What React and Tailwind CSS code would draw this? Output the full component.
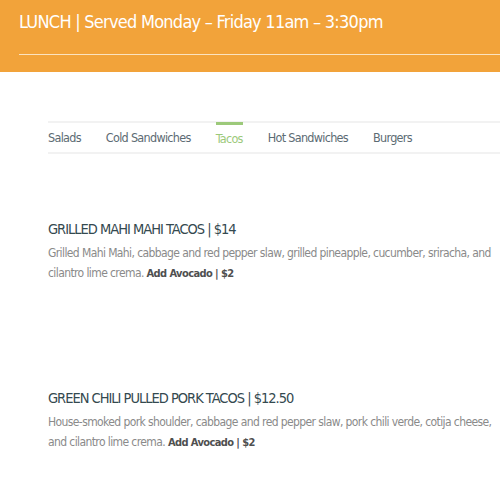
const font = { fontFamily: '"DejaVu Sans", sans-serif', fontStretch: 'condensed' }

const tabs = ['Salads', 'Cold Sandwiches', 'Tacos', 'Hot Sandwiches', 'Burgers']

const items = [
  {
    title: 'GRILLED MAHI MAHI TACOS | $14',
    desc: 'Grilled Mahi Mahi, cabbage and red pepper slaw, grilled pineapple, cucumber, sriracha, and cilantro lime crema.',
  },
  {
    title: 'GREEN CHILI PULLED PORK TACOS | $12.50',
    desc: 'House-smoked pork shoulder, cabbage and red pepper slaw, pork chili verde, cotija cheese, and cilantro lime crema.',
  },
]

export default function App() {
  return (
    <div className="w-[500px] h-[500px] overflow-hidden bg-white" style={font}>
      <div className="bg-[#f2a33a] h-[72px] pl-[19px] pt-[8px]">
        <h1 className="text-white text-[18px] leading-[28px] tracking-[-0.75px] whitespace-nowrap">
          LUNCH | Served Monday – Friday 11am – 3:30pm
        </h1>
        <div className="mt-[18px] h-px bg-[#fbe3c0]" />
      </div>

      <div className="pl-[48px] pt-[49px]">
        <div className="border-t-2 border-b-2 border-[#f2f2f2] h-[33px] flex gap-[25px] text-[12.5px] tracking-[-0.7px] text-[#5c6b73] whitespace-nowrap">
          {tabs.map((t) => (
            <div
              key={t}
              className={
                t === 'Tacos'
                  ? 'relative text-[#9cc97a] pt-[7px]'
                  : 'pt-[6px]'
              }
            >
              {t === 'Tacos' && (
                <div className="absolute -top-[1px] left-0 right-0 h-[3px] bg-[#9cc97a]" />
              )}
              {t}
            </div>
          ))}
        </div>

        {items.map((it, i) => (
          <div key={i} className={i === 0 ? 'mt-[63px]' : 'mt-[102px]'}>
            <h2 className="text-[14.5px] leading-[24px] tracking-[-1px] text-[#34494f] whitespace-nowrap">{it.title}</h2>
            <p className="mt-[2px] text-[12px] leading-[20px] tracking-[-0.6px] text-[#8a8a8a]">
              {it.desc}{' '}
              <span className="text-[#4f4f4f] font-bold text-[11px] tracking-[-0.6px]">Add Avocado | $2</span>
            </p>
          </div>
        ))}
      </div>
    </div>
  )
}
